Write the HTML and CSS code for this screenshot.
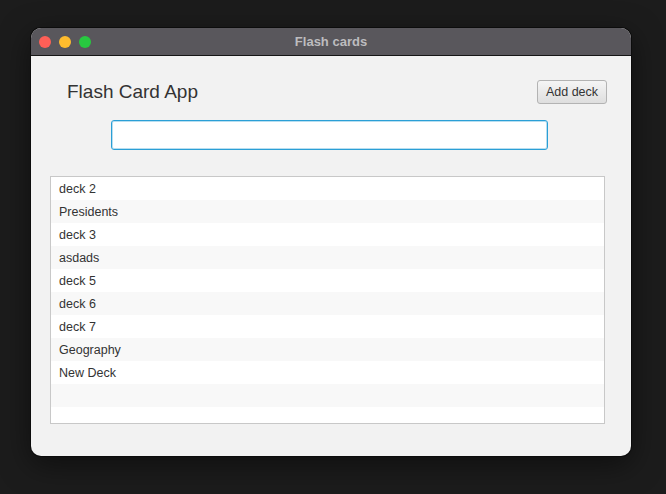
FILE: index.html
```html
<!DOCTYPE html>
<html>
<head>
<meta charset="utf-8">
<link rel="stylesheet" href="styles.css">
</head>
<body>
<div class="window">
  <div class="titlebar">
    <div class="lights">
      <span class="light red"></span>
      <span class="light yellow"></span>
      <span class="light green"></span>
    </div>
    <div class="title">Flash cards</div>
  </div>
  <div class="content">
    <div class="header">
      <h1 class="app-title">Flash Card App</h1>
      <button class="btn">Add deck</button>
    </div>
    <div class="search-row">
      <input class="search" type="text">
    </div>
    <ul class="list">
      <li class="row">deck 2</li>
      <li class="row">Presidents</li>
      <li class="row">deck 3</li>
      <li class="row">asdads</li>
      <li class="row">deck 5</li>
      <li class="row">deck 6</li>
      <li class="row">deck 7</li>
      <li class="row">Geography</li>
      <li class="row">New Deck</li>
      <li class="row"></li>
      <li class="row"></li>
    </ul>
  </div>
</div>
</body>
</html>
```

FILE: styles.css
```css
* { box-sizing: border-box; }
html, body { margin: 0; padding: 0; }
body {
  width: 666px;
  height: 494px;
  background: #1c1c1c;
  font-family: "Liberation Sans", Arial, sans-serif;
  padding: 28px 0 0 31px;
  overflow: hidden;
}
.window {
  width: 600px;
  height: 428px;
  border-radius: 10px;
  overflow: hidden;
  background: #f2f2f2;
  box-shadow: 0 0 0 1px #0c0c0c, 0 8px 30px rgba(0,0,0,0.5);
  display: flex;
  flex-direction: column;
}
.titlebar {
  height: 28px;
  background: #59575c;
  border-bottom: 1px solid #161616;
  position: relative;
  display: flex;
  align-items: center;
  justify-content: center;
  flex-shrink: 0;
}
.lights {
  position: absolute;
  left: 8px;
  top: 8px;
  display: flex;
  gap: 8px;
}
.light {
  width: 12px;
  height: 12px;
  border-radius: 50%;
  display: block;
}
.red { background: #fe5f57; }
.yellow { background: #febc2e; }
.green { background: #28c840; }
.title {
  color: #bdbcbf;
  font-weight: bold;
  font-size: 13px;
}
.content {
  flex: 1;
  padding: 0 24px 0 19px;
}
.header {
  display: flex;
  justify-content: space-between;
  align-items: flex-start;
  height: 64px;
  padding-top: 24px;
}
.app-title {
  margin: 0 0 0 17px;
  font-weight: normal;
  font-size: 19px;
  color: #333;
  line-height: 22px;
  padding-top: 1px;
}
.btn {
  width: 70px;
  height: 24px;
  font-family: "Liberation Sans", Arial, sans-serif;
  font-size: 12.5px;
  color: #333;
  background: linear-gradient(#f5f5f5, #dedede);
  border: 1px solid #b3b3b3;
  border-radius: 3px;
  padding: 0;
}
.search-row {
  display: flex;
  padding-left: 61px;
}
.search {
  width: 437px;
  height: 30px;
  border: 1px solid #2a9fd6;
  box-shadow: inset 0 0 0 1px #b8def0;
  border-radius: 3px;
  background: #fff;
  outline: none;
  margin: 0;
}
.list {
  list-style: none;
  margin: 26px 0 0 0;
  padding: 0;
  width: 555px;
  height: 248px;
  border: 1px solid #c8c8c8;
  background: #fff;
  overflow: hidden;
}
.row {
  height: 23px;
  line-height: 22px;
  padding-top: 1px;
  padding-left: 8px;
  font-size: 12.5px;
  color: #333;
  background: #fff;
}
.row:nth-child(even) { background: #f8f8f8; }
```
